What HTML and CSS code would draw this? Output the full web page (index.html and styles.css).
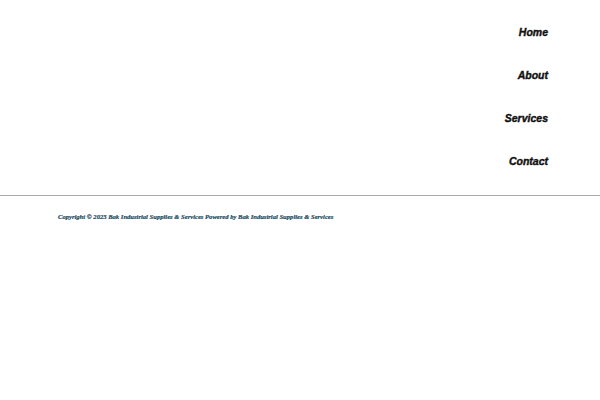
FILE: index.html
```html
<!DOCTYPE html>
<html>
<head>
<meta charset="utf-8">
<link rel="stylesheet" href="styles.css">
</head>
<body>
<header class="header">
  <nav class="nav">
    <a class="nav-link" href="#">Home</a>
    <a class="nav-link" href="#">About</a>
    <a class="nav-link" href="#">Services</a>
    <a class="nav-link" href="#">Contact</a>
  </nav>
</header>
<footer class="footer">
  <p class="copy">Copyright © 2023 Bak Industrial Supplies &amp; Services Powered by Bak Industrial Supplies &amp; Services</p>
</footer>
</body>
</html>
```
FILE: styles.css
```css
html, body {
  margin: 0;
  padding: 0;
  background: #fff;
}
.header {
  padding: 11px 52px 12px 0;
  border-bottom: 1px solid #aaaaaa;
}
.nav {
  display: flex;
  flex-direction: column;
  align-items: flex-end;
}
.nav-link {
  display: block;
  height: 43px;
  line-height: 43px;
  font-family: "Liberation Sans", Arial, sans-serif;
  font-weight: bold;
  font-style: italic;
  font-size: 10.5px;
  color: #111;
  text-decoration: none;
  -webkit-text-stroke: 0.4px #111;
}
.footer {
  padding: 17px 58px;
}
.copy {
  margin: 0;
  font-family: "Liberation Serif", serif;
  font-weight: bold;
  font-style: italic;
  font-size: 6.6px;
  line-height: 8px;
  color: #1d4a5c;
  -webkit-text-stroke: 0.2px #1d4a5c;
}
```
